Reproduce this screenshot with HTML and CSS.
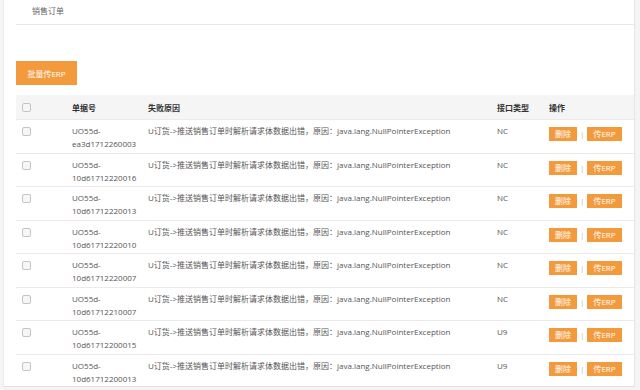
FILE: index.html
```html
<!DOCTYPE html>
<html lang="zh-CN">
<head>
    <meta charset="UTF-8">
    <title>销售订单</title>
    <link rel="stylesheet" href="styles.css">
</head>
<body>
<div class="page">
    <div class="crumb">销售订单</div>

    <div class="toolbar">
        <button class="btn-main">批量传ERP</button>
    </div>

    <table class="grid">
        <thead>
            <tr>
                <th class="col-check"><input type="checkbox"></th>
                <th class="col-no">单据号</th>
                <th class="col-reason">失败原因</th>
                <th class="col-type">接口类型</th>
                <th class="col-ops">操作</th>
            </tr>
        </thead>
        <tbody id="rows"></tbody>
    </table>
</div>

<script>
var orders = [
    ['UO55d-', 'ea3d1712260003', 'NC'],
    ['UO55d-', '10d61712220016', 'NC'],
    ['UO55d-', '10d61712220013', 'NC'],
    ['UO55d-', '10d61712220010', 'NC'],
    ['UO55d-', '10d61712220007', 'NC'],
    ['UO55d-', '10d61712210007', 'NC'],
    ['UO55d-', '10d61712200015', 'U9'],
    ['UO55d-', '10d61712200013', 'U9']
];
var reason = 'U订货->推送销售订单时解析请求体数据出错，原因：java.lang.NullPointerException';
var tbody = document.getElementById('rows');

for (var i = 0; i < orders.length; i++) {
    var o = orders[i];
    var tr = document.createElement('tr');
    tr.innerHTML =
        '<td class="col-check"><input type="checkbox"></td>' +
        '<td class="col-no">' + o[0] + '<br>' + o[1] + '</td>' +
        '<td class="col-reason">' + reason + '</td>' +
        '<td class="col-type">' + o[2] + '</td>' +
        '<td class="col-ops"><span class="btn-sm">删除</span><span class="sep">|</span><span class="btn-sm">传ERP</span></td>';
    tbody.appendChild(tr);
}
</script>
</body>
</html>
```

FILE: styles.css
```css
body {
    margin: 0;
    background: #f4f4f4;
    font-family: "Open Sans", "Noto Sans CJK SC", sans-serif;
    font-size: 8px;
    color: #555;
}
.page {
    margin-left: 3px;
    width: 630px;
    height: 386px;
    background: #fff;
    border-right: 1px solid #e6e6e6;
    border-bottom: 1px solid #e0e0e0;
    border-left: 1px solid #ececec;
    overflow: hidden;
}
.crumb {
    margin-left: 12px;
    padding: 6px 0 0 16px;
    height: 18px;
    border-bottom: 1px solid #e6e6e6;
    color: #666;
    line-height: 10px;
}
.toolbar {
    padding: 36px 0 10px 12px;
}
.btn-main {
    display: block;
    width: 61px;
    height: 24px;
    padding: 0;
    border: none;
    background: #f39a3c;
    color: #fff;
    font-family: inherit;
    font-size: 8px;
}
.grid {
    margin-left: 12px;
    width: 618px;
    border-collapse: collapse;
    table-layout: fixed;
}
.grid th {
    height: 24px;
    padding: 0;
    background: #f5f5f5;
    color: #333;
    font-weight: bold;
    text-align: left;
}
.grid td {
    height: 33.5px;
    padding: 4px 0 0;
    border-top: 1px solid #ebebeb;
    line-height: 13px;
    vertical-align: top;
    box-sizing: border-box;
}
.grid input {
    appearance: none;
    display: block;
    width: 9px;
    height: 9px;
    margin: 0;
    border: 1px solid #c4c4c4;
    border-radius: 2px;
    background: #f6f6f6;
    box-sizing: border-box;
}
.grid td input {
    margin-top: 3px;
}
.grid .col-check {
    width: 50px;
    padding-left: 6px;
}
.col-no {
    width: 76px;
}
.col-reason {
    width: 349px;
}
.col-type {
    width: 52px;
}
.grid td.col-ops {
    padding-top: 7px;
    line-height: 14px;
}
.btn-sm {
    display: inline-block;
    height: 14px;
    padding: 0 6px;
    background: #f39a3c;
    color: #fff;
    font-size: 8px;
    vertical-align: top;
}
.sep {
    display: inline-block;
    margin: 0 3px;
    color: #bbb;
    vertical-align: top;
}
```
